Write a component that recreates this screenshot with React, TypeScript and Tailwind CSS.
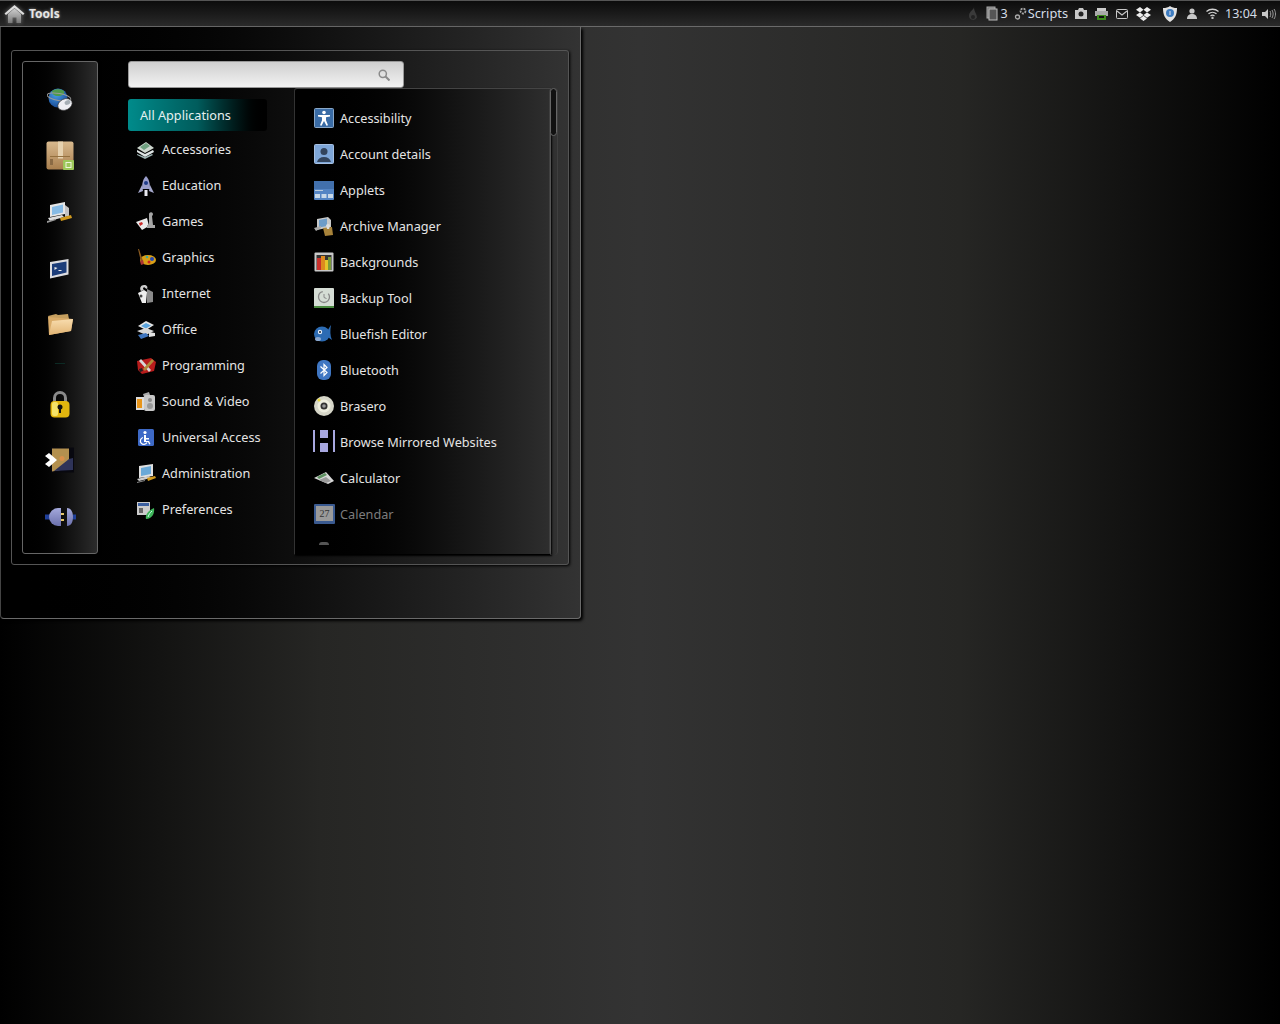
import React from 'react';

const font = { fontFamily: '"Noto Sans", sans-serif' };

const Svg: React.FC<{ children: React.ReactNode }> = ({ children }) => (
  <svg width={22} height={22} viewBox="0 0 22 22" className="shrink-0">
    {children}
  </svg>
);

// panel icons
const HomeIcon = () => (
  <svg width="21" height="21" viewBox="0 0 21 21" className="shrink-0 drop-shadow-[0_0_2px_#fff6]">
    <defs>
      <linearGradient id="homeBody" x1="0" y1="0" x2="0" y2="1">
        <stop offset="0" stopColor="#cfcfcf" />
        <stop offset="1" stopColor="#777" />
      </linearGradient>
    </defs>
    <path d="M4 11 10.500 5.500 17 11v9h-4.500v-5.500h-4V20H4z" fill="url(#homeBody)" />
    <path d="M0.500 10.500 10.500 2l10 8.500-1.500 1.500-8.500-7-8.500 7z" fill="#dcdcdc" />
  </svg>
);

const TrayFlame = () => (
  <svg width="12" height="16" viewBox="0 0 12 16"><path d="M7 1c0 3-5 4-5 9a4.200 4.200 0 0 0 8 1.500C10 8 7 6 7 1z" fill="#3a3a3a" /><circle cx="6" cy="11" r="2" fill="#222" /></svg>
);
const TrayClip = () => (
  <svg width="12" height="15" viewBox="0 0 12 15"><rect x="1" y="1" width="8" height="11" fill="#777" stroke="#aaa" /><rect x="3" y="3" width="8" height="11" fill="#555" stroke="#bbb" /></svg>
);
const TrayGears = () => (
  <svg width="14" height="15" viewBox="0 0 14 15" fill="none" stroke="#aaa"><circle cx="9" cy="5" r="2.500" strokeWidth="1.800" strokeDasharray="2 1" /><circle cx="3.500" cy="11" r="2" strokeWidth="1.300" /></svg>
);
const TrayCamera = () => (
  <svg width="12" height="11" viewBox="0 0 12 11"><path d="M0 2h3l1-2h4l1 2h3v9H0z" fill="#c8c8c8" /><circle cx="6" cy="6" r="2.500" fill="#222" /></svg>
);
const TrayPrinter = () => (
  <svg width="13" height="12" viewBox="0 0 13 12"><rect x="2" y="0" width="9" height="3" fill="#ccc" /><rect x="0" y="3" width="13" height="5" fill="#aaa" /><rect x="2" y="7" width="9" height="5" fill="#3e8a1e" /><rect x="4" y="8" width="5" height="2" fill="#111" /></svg>
);
const TrayMail = () => (
  <svg width="12" height="10" viewBox="0 0 12 10"><rect x="0.500" y="0.500" width="11" height="9" rx="1" fill="none" stroke="#c8c8c8" /><path d="m1 2 5 4 5-4" fill="none" stroke="#c8c8c8" strokeWidth="1.200" /></svg>
);
const TrayDropbox = () => (
  <svg width="15" height="14" viewBox="0 0 15 14" fill="#eee"><path d="M4 0 0 2.700l4 2.700 3.500-2.700zM11 0 7.500 2.700 11 5.400l4-2.700zM0 8l4 2.700L7.500 8 4 5.400zM11 5.400 7.500 8l3.500 2.700L15 8zM4 11.500l3.500 2.500 3.500-2.500-3.500-2.700z" /></svg>
);
const TrayShield = () => (
  <svg width="16" height="16" viewBox="0 0 16 16"><path d="M8 0c2 1.500 4 2 7 2 0 7-2 11-7 14C3 13 1 9 1 2c3 0 5-.5 7-2z" fill="#e2e2e2" /><circle cx="8" cy="7" r="4" fill="#3d7cc0" /><rect x="7.500" y="5" width="1" height="4" fill="#dde" /></svg>
);
const TrayUser = () => (
  <svg width="10" height="11" viewBox="0 0 10 11" fill="#c8c8c8"><circle cx="5" cy="3" r="2.600" /><path d="M0 11c0-3.500 2-5 5-5s5 1.500 5 5z" /></svg>
);
const TrayWifi = () => (
  <svg width="13" height="11" viewBox="0 0 13 11" fill="none" stroke="#d0d0d0"><path d="M.5 3.500c3.500-3 8.500-3 12 0" strokeWidth="1.300" /><path d="M2.500 5.800c2.300-2 5.700-2 8 0" strokeWidth="1.300" /><path d="M4.500 8c1.200-1 2.800-1 4 0" strokeWidth="1.300" /><circle cx="6.500" cy="10" r=".8" fill="#d0d0d0" /></svg>
);
const TrayVolume = () => (
  <svg width="14" height="12" viewBox="0 0 14 12"><path d="M0 4h3l3-3v10L3 8H0z" fill="#c8c8c8" /><path d="M8 3c1 2 1 4 0 6M10 2c1.500 2.500 1.500 5.500 0 8M12 1c2 3 2 7 0 10" stroke="#999" fill="none" /></svg>
);

// sidebar icons
const GlobeMouse = () => (
  <svg width="26" height="25" viewBox="0 0 26 25">
    <defs>
      <radialGradient id="globeFill" cx="0.4" cy="0.3" r="0.8">
        <stop offset="0" stopColor="#4aa0e8" />
        <stop offset="1" stopColor="#12408c" />
      </radialGradient>
    </defs>
    <circle cx="11" cy="10" r="9.500" fill="url(#globeFill)" />
    <path d="M5 3c3-2.500 9-2.500 12 0 1 3-2 5-6 5S5 6 5 3z" fill="#4f9a4c" />
    <ellipse cx="12" cy="9" rx="12" ry="3.500" fill="none" stroke="#9a9a9a" strokeWidth="1" transform="rotate(10 12 9)" />
    <ellipse cx="18" cy="16.500" rx="7.500" ry="5.500" fill="#eeeef2" stroke="#222" strokeWidth=".6" transform="rotate(-25 18 16.500)" />
    <ellipse cx="20.500" cy="14.500" rx="3" ry="2.200" fill="#a6aeb4" transform="rotate(-25 20.500 14.500)" />
  </svg>
);
const PackageIcon = () => (
  <svg width="29" height="29" viewBox="0 0 29 29">
    <defs>
      <linearGradient id="boxFill" x1="0" y1="0" x2="0" y2="1">
        <stop offset="0" stopColor="#d8b98e" />
        <stop offset="1" stopColor="#a97f4e" />
      </linearGradient>
    </defs>
    <rect x="0.500" y="0.500" width="27" height="28" rx="2" fill="url(#boxFill)" />
    <rect x="12" y="0.500" width="5" height="17" fill="#e6d2b0" />
    <rect x="4" y="15" width="20" height="1" fill="#94703f" />
    <rect x="4" y="18" width="3" height="6" fill="#8a6a44" />
    <rect x="17" y="19" width="11" height="10" rx="1" fill="#9dc75a" />
    <rect x="20" y="21.500" width="5" height="5" fill="none" stroke="#eef5dc" />
  </svg>
);
const AdminComputer = () => (
  <svg width="26" height="24" viewBox="0 0 26 24">
    <path d="M3 3 18 0v12L3 15z" fill="#e6e6e6" />
    <path d="M5 5 16 2.500v8L5 13z" fill="#86bbe6" />
    <path d="M18 3l4 3v8l-4 1z" fill="#c4c4c4" />
    <path d="M1 16l14-3 2 2-14 4z" fill="#ddd" />
    <path d="M13 16l11-3 1 3-11 3z" fill="#d19a1e" />
    <path d="M0 19l9-2v1l-9 3z" fill="#999" />
  </svg>
);
const TerminalIcon = () => (
  <svg width="19" height="20" viewBox="0 0 19 20">
    <path d="M0 3 18.500 0v15.500L0 19.500z" fill="#dcdce0" />
    <path d="M2 5 16.500 2.500V13.500L2 17z" fill="#1c3d7a" />
    <path d="M4.500 8l3 1-3 2zM8.500 11h3v1h-3z" fill="#eee" />
  </svg>
);
const FolderIcon = () => (
  <svg width="26" height="24" viewBox="0 0 26 24">
    <defs>
      <linearGradient id="folderFill" x1="0" y1="0" x2="0" y2="1">
        <stop offset="0" stopColor="#f8dcae" />
        <stop offset="1" stopColor="#e2b473" />
      </linearGradient>
    </defs>
    <path d="M1 4 9 2l2 1 10-1 1 5H2z" fill="#c59f5f" />
    <path d="M1 5l1 18 22-4 2-12z" fill="#d9ab68" />
    <path d="M5 9l21-2-2 12-22 4z" fill="url(#folderFill)" />
  </svg>
);
const LockIcon = () => (
  <svg width="20" height="28" viewBox="0 0 20 28">
    <path d="M3 13V8a7 7 0 0 1 14 0v5h-3V8a4 4 0 0 0-8 0v5z" fill="#8b8b8b" />
    <rect x="0.500" y="11" width="19" height="16.500" rx="4" fill="#e2b60e" />
    <rect x="2" y="12" width="6" height="14" rx="2" fill="#f5e368" />
    <circle cx="10" cy="17" r="2.500" fill="#111" />
    <rect x="9" y="18" width="2" height="5" fill="#111" />
  </svg>
);
const LogoutIcon = () => (
  <svg width="29" height="26" viewBox="0 0 29 26">
    <rect x="6" y="0.500" width="23" height="25" fill="#08080f" />
    <path d="M7 1.500h17v20l-17 3z" fill="#b3904f" />
    <path d="M24 12l4-1v12l-19 1z" fill="#2e3358" />
    <circle cx="17" cy="11.500" r="2.500" fill="#d98f4a" />
    <path d="M0 9l4-3 8 7-8 7-4-3 5-4z" fill="#fff" />
  </svg>
);
const PlugIcon = () => (
  <svg width="31" height="18" viewBox="0 0 31 18">
    <defs>
      <linearGradient id="plugFill" x1="0" y1="0" x2="0" y2="1">
        <stop offset="0" stopColor="#a4a9dc" />
        <stop offset="1" stopColor="#6b70ac" />
      </linearGradient>
    </defs>
    <rect x="0" y="6.500" width="6" height="5" fill="#1f3f9a" />
    <path d="M16 0v18h-3a9 9 0 0 1 0-18z" fill="url(#plugFill)" />
    <rect x="16" y="5" width="3" height="2" fill="#e5c66b" />
    <rect x="16" y="11" width="3" height="2" fill="#e5c66b" />
    <path d="M22 0c4 0 6 4 6 9s-2 9-6 9z" fill="url(#plugFill)" />
    <rect x="28" y="6.500" width="3" height="5" fill="#1f3f9a" />
  </svg>
);

const SearchGlyph = () => (
  <svg width="12" height="12" viewBox="0 0 12 12" fill="none" stroke="#8a8a8a" strokeWidth="1.500">
    <circle cx="4.800" cy="4.800" r="3.600" />
    <path d="m7.500 7.500 4 4" strokeWidth="2" />
  </svg>
);

// category icons
const cat = {
  accessories: <Svg><path d="M2 9 11 3l8 6-9 5z" fill="#cfd8d0" /><path d="M5 8l6-4 4 3-6 4z" fill="#6fa080" /><path d="M2 13l8 5 9-5-1-2-8 4-8-4z" fill="#dfe5e5" /><path d="M2 16l8 4 8-4-1-1-7 3-8-3z" fill="#9fb5b5" /></Svg>,
  education: <Svg><path d="M11 1c3 3 4 7 4 13H7C7 8 8 4 11 1z" fill="#9a9ecb" /><circle cx="11" cy="8" r="2" fill="#1e3c8a" /><path d="M7 10l-4 8 5-2zM15 10l4 8-5-2z" fill="#a5a8cc" /><path d="M9.500 15h3v6h-3z" fill="#e8e8f0" /></Svg>,
  games: <Svg><path d="M1 11l11-4 2 8-7 4z" fill="#eaeaea" /><path d="M4 12l3-1 1 2-3 2z" fill="#cc2a2a" /><path d="M14 3a2 2 0 1 1 3 2l1 9h2v3h-8v-3h2z" fill="#a6a6a6" /></Svg>,
  graphics: <Svg><ellipse cx="13" cy="13" rx="8" ry="5" fill="#d9a017" /><circle cx="17" cy="12" r="2" fill="#2248b4" /><circle cx="14" cy="15" r="1.500" fill="#c22" /><circle cx="12" cy="10" r="1.300" fill="#4a9" /><path d="M3 2l3 13 2-1L4 2z" fill="#8a5a20" /><path d="M5 14l3-1 1 4-3 1z" fill="#a33" /></Svg>,
  internet: <Svg><path d="M9 2c3 0 4 2 3 4l-2-1c0-1-2-1-2 1l1 1-3 1C4 5 6 2 9 2z" fill="#ccc" /><path d="M3 10l6-3 3 2-1 11H7z" fill="#eee" /><path d="M12 6l6 3v10l-6 1z" fill="#8a8a8a" /><circle cx="6" cy="13" r="1.500" fill="#444" /></Svg>,
  office: <Svg><path d="M3 7l8-5 8 4-8 5z" fill="#e5e5e5" /><path d="M6 7l5-3 5 2.500-5 3z" fill="#5ca5de" /><path d="M2 12l9-3 8 3-8 4z" fill="#d8d8d8" /><path d="M3 16l8-2 3 3-8 3z" fill="#3f76c0" /><path d="M14 13l6 1v3l-6 1z" fill="#e0e0e0" /></Svg>,
  programming: <Svg><path d="M2 6l14-3 5 4-2 9-12 3-4-4z" fill="#b81c1c" /><path d="M6 4l10 11-2 2L4 6z" fill="#d8d8d8" /><path d="M17 4 8 14l2 2 9-10z" fill="#b08a3a" /><path d="M4 14l3-1 1 3-3 1z" fill="#222" /></Svg>,
  sound: <Svg><rect x="1" y="6" width="8" height="13" fill="#ddd" /><rect x="2" y="8" width="5" height="9" fill="#e8951a" /><path d="M8 3l6-2 1 3-6 2z" fill="#aaa" /><rect x="9" y="4" width="11" height="16" rx="2" fill="#c8c8c8" /><circle cx="15" cy="9" r="2" fill="#888" /><circle cx="15" cy="15" r="3" fill="#999" /></Svg>,
  universal: <Svg><rect x="3" y="2" width="16" height="17" rx="1.500" fill="#3d69c6" /><circle cx="10" cy="5.500" r="1.600" fill="#fff" /><path d="M9 8h2v3h3v1.500h-3V14h3l1.500 3-1.300.500L13 15H9z" fill="#fff" /><path d="M8 10.500a3.500 3.500 0 1 0 4 5" fill="none" stroke="#fff" strokeWidth="1.200" /></Svg>,
  administration: <Svg><path d="M4 3 18 1v12L4 15z" fill="#e0e0e0" /><path d="M6 5l10-2v8L6 13z" fill="#6aa9d8" /><path d="M2 16l12-3 2 2-12 3z" fill="#ccc" /><path d="M12 15l8-2 1 2-8 3z" fill="#d19a1e" /><path d="M2 19l8-2v1l-8 2z" fill="#888" /></Svg>,
  preferences: <Svg><rect x="2" y="3" width="13" height="13" fill="#ccc" /><rect x="3" y="4" width="11" height="3" fill="#3b5fa0" /><rect x="4" y="9" width="4" height="5" fill="#666" /><path d="M11 20c-1-3 1-8 8-11 1 5-2 11-8 11z" fill="#3fb55a" /><path d="M13 18c1-3 2-4 4-6" stroke="#cfe" fill="none" /></Svg>,
};

// application icons
const app = {
  accessibility: <Svg><rect x="1.500" y="1.500" width="19" height="19" rx="1" fill="#3a6ca6" stroke="#8aa8c8" /><circle cx="11" cy="5.500" r="1.800" fill="#fff" /><path d="M5 8h12v1.500l-4 .800v3l2 5-1.500.500L11 14l-2.500 4.800L7 18.300l2-5v-3l-4-.800z" fill="#fff" /></Svg>,
  account: <Svg><rect x="1.500" y="1.500" width="19" height="19" rx="1" fill="#7ea6d8" stroke="#a6c0e2" /><circle cx="11" cy="8.500" r="3.500" fill="#33445c" /><path d="M4 19c1-3.500 3.500-5 7-5s6 1.500 7 5z" fill="#33445c" /></Svg>,
  applets: <Svg><rect x="1" y="2" width="20" height="19" rx="1" fill="#5585c4" /><rect x="1" y="2" width="20" height="8" fill="#4270ac" /><rect x="2" y="11" width="8" height="1" fill="#bcd" /><rect x="2" y="15" width="5" height="4" fill="#c8d8e8" /><rect x="8.500" y="15" width="5" height="4" fill="#c8d8e8" /><rect x="15" y="15" width="5" height="4" fill="#c8d8e8" /></Svg>,
  archive: <Svg><path d="M4 4 15 2l3 3v7L4 15z" fill="#c8c8c8" /><path d="M6 5l8-1.500V11L6 12.500z" fill="#6d9cc8" /><path d="M1 13l7-2v2l-5 3z" fill="#aaa" /><path d="M10 13l9-1 1 8-8 1z" fill="#a8833a" /><path d="M13 10c2-2 4-1 4 1l-1 3h-2z" fill="#ddd" /></Svg>,
  backgrounds: <Svg><rect x="1.500" y="1.500" width="19" height="19" rx="1" fill="#c8c8c8" /><rect x="3.500" y="4" width="15" height="15" fill="#333" /><rect x="4" y="7" width="4" height="12" fill="#c9302c" /><rect x="8" y="5" width="4" height="14" fill="#dd8a1e" /><rect x="12" y="9" width="3" height="10" fill="#e5c42a" /><rect x="15" y="6" width="3" height="13" fill="#7a9a3a" /></Svg>,
  backup: <Svg><rect x="1" y="1" width="20" height="20" rx="1" fill="#d5ddd5" /><rect x="1" y="19" width="20" height="2" fill="#4a8a40" /><circle cx="11" cy="10" r="5.500" fill="none" stroke="#888" strokeWidth="1.300" strokeDasharray="24 6" /><path d="M11 7v3.500l2.500 1" fill="none" stroke="#888" /></Svg>,
  bluefish: <Svg><path d="M18 2c-1 5-1 11 1 15-2-1-4-3-5-5l1-5c1-2 2-4 3-5z" fill="#2c6bb3" /><ellipse cx="9" cy="11" rx="8" ry="7.500" fill="#2c6bb3" /><ellipse cx="5" cy="16" rx="3" ry="2" fill="#8aa8d0" /><circle cx="7" cy="9" r="2.200" fill="#e6eef8" /><circle cx="7" cy="9" r="1" fill="#123" /></Svg>,
  bluetooth: <Svg><rect x="4" y="1" width="14" height="20" rx="6" fill="#3f76c2" /><path d="M7.500 7.500 14 13.500 11 16.500V5.500l3 3-6.500 6" fill="none" stroke="#fff" strokeWidth="1.200" /></Svg>,
  brasero: <Svg><circle cx="11" cy="11" r="10" fill="#d6d6c8" /><circle cx="11" cy="11" r="6.500" fill="#eeeedf" /><circle cx="11" cy="11" r="3.500" fill="#333" /><circle cx="11" cy="11" r="1.800" fill="#999" /><circle cx="6" cy="5" r="1.500" fill="#e8d63c" /></Svg>,
  calculator: <Svg><path d="M1 11 13 5l8 9-6 3z" fill="#d8d8d8" /><path d="M4 10l8-4 2 2-8 4z" fill="#5d9160" /><path d="M6 13l7-3 5 4-5 2z" fill="#999" /></Svg>,
  calendar: <Svg><rect x="1" y="1" width="21" height="20" rx="1" fill="#3a5a90" /><rect x="3" y="3" width="17" height="15" fill="#9a9a9a" /><text x="11.500" y="14" fontSize="10" textAnchor="middle" fill="#333" fontFamily="Liberation Serif, serif">27</text></Svg>,
};

const categories: [string, React.ReactNode][] = [
  ['Accessories', cat.accessories],
  ['Education', cat.education],
  ['Games', cat.games],
  ['Graphics', cat.graphics],
  ['Internet', cat.internet],
  ['Office', cat.office],
  ['Programming', cat.programming],
  ['Sound & Video', cat.sound],
  ['Universal Access', cat.universal],
  ['Administration', cat.administration],
  ['Preferences', cat.preferences],
];

const BrowseIcon = () => (
  <svg width="22" height="24" viewBox="0 0 22 24" className="shrink-0">
    <rect x="0" y="0" width="2" height="22" fill="#a8a8e0" />
    <rect x="20" y="0" width="2" height="22" fill="#a8a8e0" />
    <rect x="7" y="0" width="8" height="8" fill="#a8a8e0" />
    <rect x="7" y="13" width="8" height="9" fill="#a8a8e0" />
  </svg>
);

const apps: [string, React.ReactNode][] = [
  ['Accessibility', app.accessibility],
  ['Account details', app.account],
  ['Applets', app.applets],
  ['Archive Manager', app.archive],
  ['Backgrounds', app.backgrounds],
  ['Backup Tool', app.backup],
  ['Bluefish Editor', app.bluefish],
  ['Bluetooth', app.bluetooth],
  ['Brasero', app.brasero],
  ['Browse Mirrored Websites', <BrowseIcon />],
  ['Calculator', app.calculator],
];

const Panel = () => (
  <div className="flex h-[27px] items-center justify-between border-t border-b border-t-[#555] border-b-[#6a6a6a] bg-gradient-to-b from-[#0c0c0c] to-[#2a2a2a] pl-[4px] pr-[4px]">
    <div className="flex items-center gap-[4px]">
      <HomeIcon />
      <span className="text-[12px] font-bold text-[#e6e6e6] [text-shadow:0_0_3px_#fff8]">Tools</span>
    </div>
    <div className="flex items-center text-[12.5px] text-[#d4dce6]">
      <TrayFlame />
      <span className="ml-[7px] flex items-center gap-[3px]">
        <TrayClip />
        <span className="mt-[2px]">3</span>
      </span>
      <span className="ml-[6px] flex items-center">
        <TrayGears />
        <span className="text-[12.8px]">Scripts</span>
      </span>
      <span className="ml-[7px] flex items-center gap-[8px]">
        <TrayCamera />
        <TrayPrinter />
        <TrayMail />
        <TrayDropbox />
      </span>
      <span className="ml-[11px]"><TrayShield /></span>
      <span className="ml-[9px]"><TrayUser /></span>
      <span className="ml-[9px]"><TrayWifi /></span>
      <span className="ml-[6px] mt-[2px]">13:04</span>
      <span className="ml-[5px]"><TrayVolume /></span>
    </div>
  </div>
);

const Sidebar = () => (
  <div className="flex h-[493px] w-[76px] shrink-0 flex-col items-center rounded-[3px] border border-[#666] bg-gradient-to-r from-[#000] to-[#2c2c2c] pt-[11px] shadow-[1px_1px_3px_#000]">
    <div className="flex h-[55px] items-center justify-center pr-[1px]"><GlobeMouse /></div>
    <div className="flex h-[55px] items-center justify-center"><PackageIcon /></div>
    <div className="mt-[3px] flex h-[55px] items-center justify-center"><AdminComputer /></div>
    <div className="flex h-[55px] items-center justify-center pr-[1px]"><TerminalIcon /></div>
    <div className="flex h-[55px] items-center justify-center"><FolderIcon /></div>
    <div className="mt-[12px] h-px w-[10px] bg-[#0c2a24]" />
    <div className="mt-[12px] flex h-[55px] items-center justify-center pr-[1px]"><LockIcon /></div>
    <div className="mt-[1px] flex h-[55px] items-center justify-center pr-[2px]"><LogoutIcon /></div>
    <div className="mt-[2px] flex h-[55px] items-center justify-center"><PlugIcon /></div>
  </div>
);

const Categories = () => (
  <div className="w-[166px] shrink-0">
    <div className="flex h-[32px] w-[139px] items-center rounded-[3px] bg-gradient-to-r from-[#008b8b] via-[#005c5c] to-[#000] pl-[12px] text-[12.7px] text-[#e6f0f0]">
      <span className="mt-[2px]">All Applications</span>
    </div>
    {categories.map(([name, icon]) => (
      <div key={name} className="flex h-[36px] items-center gap-[5px] pl-[7px] pt-[1px] text-[12.7px] text-[#e4e4e4]">
        {icon}
        <span>{name}</span>
      </div>
    ))}
  </div>
);

const AppList = () => (
  <div className="flex h-[467px] w-[264px] shrink-0">
    <div className="h-full w-[257px] overflow-hidden rounded-tl-[3px] border border-t-[#444] border-l-[#333] border-b-[#000] border-r-[#555] bg-gradient-to-r from-[#000] to-[#2e2e2e] pl-[18px] pt-[11px] shadow-[1px_1px_2px_#000]">
      {apps.map(([name, icon]) => (
        <div key={name} className="flex h-[36px] items-center gap-[5px] text-[12.7px] text-[#e4e4e4]">
          {icon}
          <span className="mt-[2px]">{name}</span>
        </div>
      ))}
      <div className="flex h-[36px] items-center gap-[5px] text-[12.7px] text-[#7c7c7c]">
        {app.calendar}
        <span className="mt-[2px]">Calendar</span>
      </div>
      <div className="ml-[6px] mt-[10px] h-[3px] w-[10px] rounded-t-full bg-[#555]" />
    </div>
    <div className="-ml-[2px] h-full w-[9px] rounded-[4px] border-r border-l border-[#3f3f3f]">
      <div className="h-[48px] rounded-[4px] border border-[#666] bg-[#111]" />
    </div>
  </div>
);

export default function App() {
  return (
    <div
      className="h-[1024px] w-[1280px] overflow-hidden bg-[linear-gradient(90deg,#000_0%,#262624_25%,#333_50%,#262624_75%,#000_100%)]"
      style={font}
    >
      <Panel />
      <div className="h-[592px] w-[581px] rounded-b-[4px] border-x border-b border-[#6a6a6a] border-l-[#444] bg-gradient-to-r from-[#000] to-[#333] pl-[10px] pt-[23px] shadow-[2px_2px_3px_#000]">
        <div className="flex h-[515px] w-[558px] rounded-[3px] border border-[#555] bg-gradient-to-r from-[#000] to-[#333] pl-[10px] pt-[10px] shadow-[1px_1px_3px_#000]">
          <Sidebar />
          <div className="ml-[30px] flex flex-col">
            <div className="flex h-[27px] w-[276px] items-center justify-end rounded-[3px] border border-[#999] bg-gradient-to-b from-[#cfcfcf] to-[#f2f2f2] pr-[13px]">
              <SearchGlyph />
            </div>
            <div className="flex">
              <div className="pt-[11px]"><Categories /></div>
              <AppList />
            </div>
          </div>
        </div>
      </div>
    </div>
  );
}
